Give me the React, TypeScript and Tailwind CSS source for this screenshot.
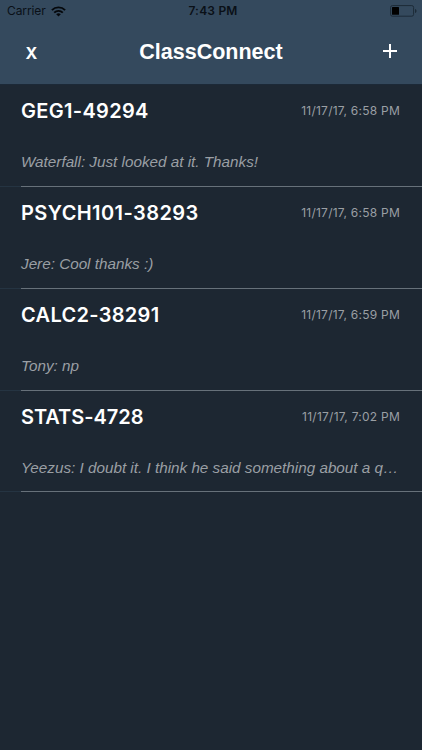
import React from 'react';

interface Chat {
  course: string;
  date: string;
  preview: string;
  tracking: string;
}

const chats: Chat[] = [
  { course: 'GEG1-49294', date: '11/17/17, 6:58 PM', preview: 'Waterfall: Just looked at it. Thanks!', tracking: 'tracking-[0.32px]' },
  { course: 'PSYCH101-38293', date: '11/17/17, 6:58 PM', preview: 'Jere: Cool thanks :)', tracking: 'tracking-[0.42px]' },
  { course: 'CALC2-38291', date: '11/17/17, 6:59 PM', preview: 'Tony: np', tracking: 'tracking-[0.3px]' },
  { course: 'STATS-4728', date: '11/17/17, 7:02 PM', preview: 'Yeezus: I doubt it. I think he said something about a q…', tracking: 'tracking-[-0.05px]' },
];

function WifiIcon() {
  return (
    <svg width="15" height="11" viewBox="0 0 15 11" fill="none" stroke="#05080c" strokeWidth="1.9">
      <path d="M0.9 4.1a9.3 9.3 0 0 1 13.2 0" />
      <path d="M3.2 6.6a6.1 6.1 0 0 1 8.6 0" />
      <path d="M7.5 10.6L5.2 8.3a3.3 3.3 0 0 1 4.6 0z" fill="#05080c" stroke="none" />
    </svg>
  );
}

function BatteryIcon() {
  return (
    <svg width="27" height="12" viewBox="0 0 27 12" fill="none">
      <rect x="0.6" y="0.6" width="23" height="10.6" rx="1.8" stroke="#1c2a37" strokeWidth="1" />
      <rect x="2" y="2" width="7" height="7.8" rx="0.5" fill="#000" />
      <path d="M25 4v4c1-.3 1.5-1.1 1.5-2S26 4.300 25 4z" fill="#1c2a37" />
    </svg>
  );
}

function StatusBar() {
  return (
    <div className="grid h-[22px] grid-cols-3 items-center pl-[7px] pr-[5px] font-['Inter',sans-serif] text-[12px] text-[#0a1017]">
      <div className="flex items-center gap-[5px]">
        <span className="tracking-[-0.1px]">Carrier</span>
        <WifiIcon />
      </div>
      <span className="pl-[2px] text-center font-semibold tracking-[0.2px]">7:43 PM</span>
      <div className="flex justify-end">
        <BatteryIcon />
      </div>
    </div>
  );
}

function ChatRow({ chat }: { chat: Chat }) {
  return (
    <li className="flex h-[101.750px]">
      <div className="w-[21px] shrink-0 border-b border-[#253442]" />
      <div className="min-w-0 flex-1 border-b border-[#67717a] pr-[22px]">
        <div className="flex h-[52px] items-center justify-between">
          <h2 className={`font-['Inter',sans-serif] text-[20px] font-semibold text-white ${chat.tracking}`}>{chat.course}</h2>
          <time className="font-['Inter',sans-serif] text-[12px] tracking-[0.25px] text-[#9a9fa4]">{chat.date}</time>
        </div>
        <p className="mt-[13px] font-['Liberation_Sans',sans-serif] text-[15.250px] leading-6 whitespace-nowrap text-[#9a9fa4] italic">
          {chat.preview}
        </p>
      </div>
    </li>
  );
}

export default function App() {
  return (
    <div className="h-[750px] w-full overflow-hidden bg-[#1d2732]">
      <header className="h-[85px] border-b border-[#1c2937] bg-[#34495d]">
        <StatusBar />
        <div className="grid h-[60px] grid-cols-[60px_1fr_60px] items-center text-white">
          <button className="pt-[1px] pl-[3px] text-center font-['Inter',sans-serif] text-[16px] font-bold">X</button>
          <h1 className="text-center font-['Liberation_Sans',sans-serif] text-[21.500px] font-bold">ClassConnect</h1>
          <button className="flex justify-center pr-[4px] pb-[2px]">
            <svg width="14" height="14" viewBox="0 0 14 14" stroke="#fff" strokeWidth="2">
              <path d="M7 0v14M0 7h14" />
            </svg>
          </button>
        </div>
      </header>
      <ul className="pt-[0.25px]">
        {chats.map((chat) => (
          <ChatRow key={chat.course} chat={chat} />
        ))}
      </ul>
    </div>
  );
}
